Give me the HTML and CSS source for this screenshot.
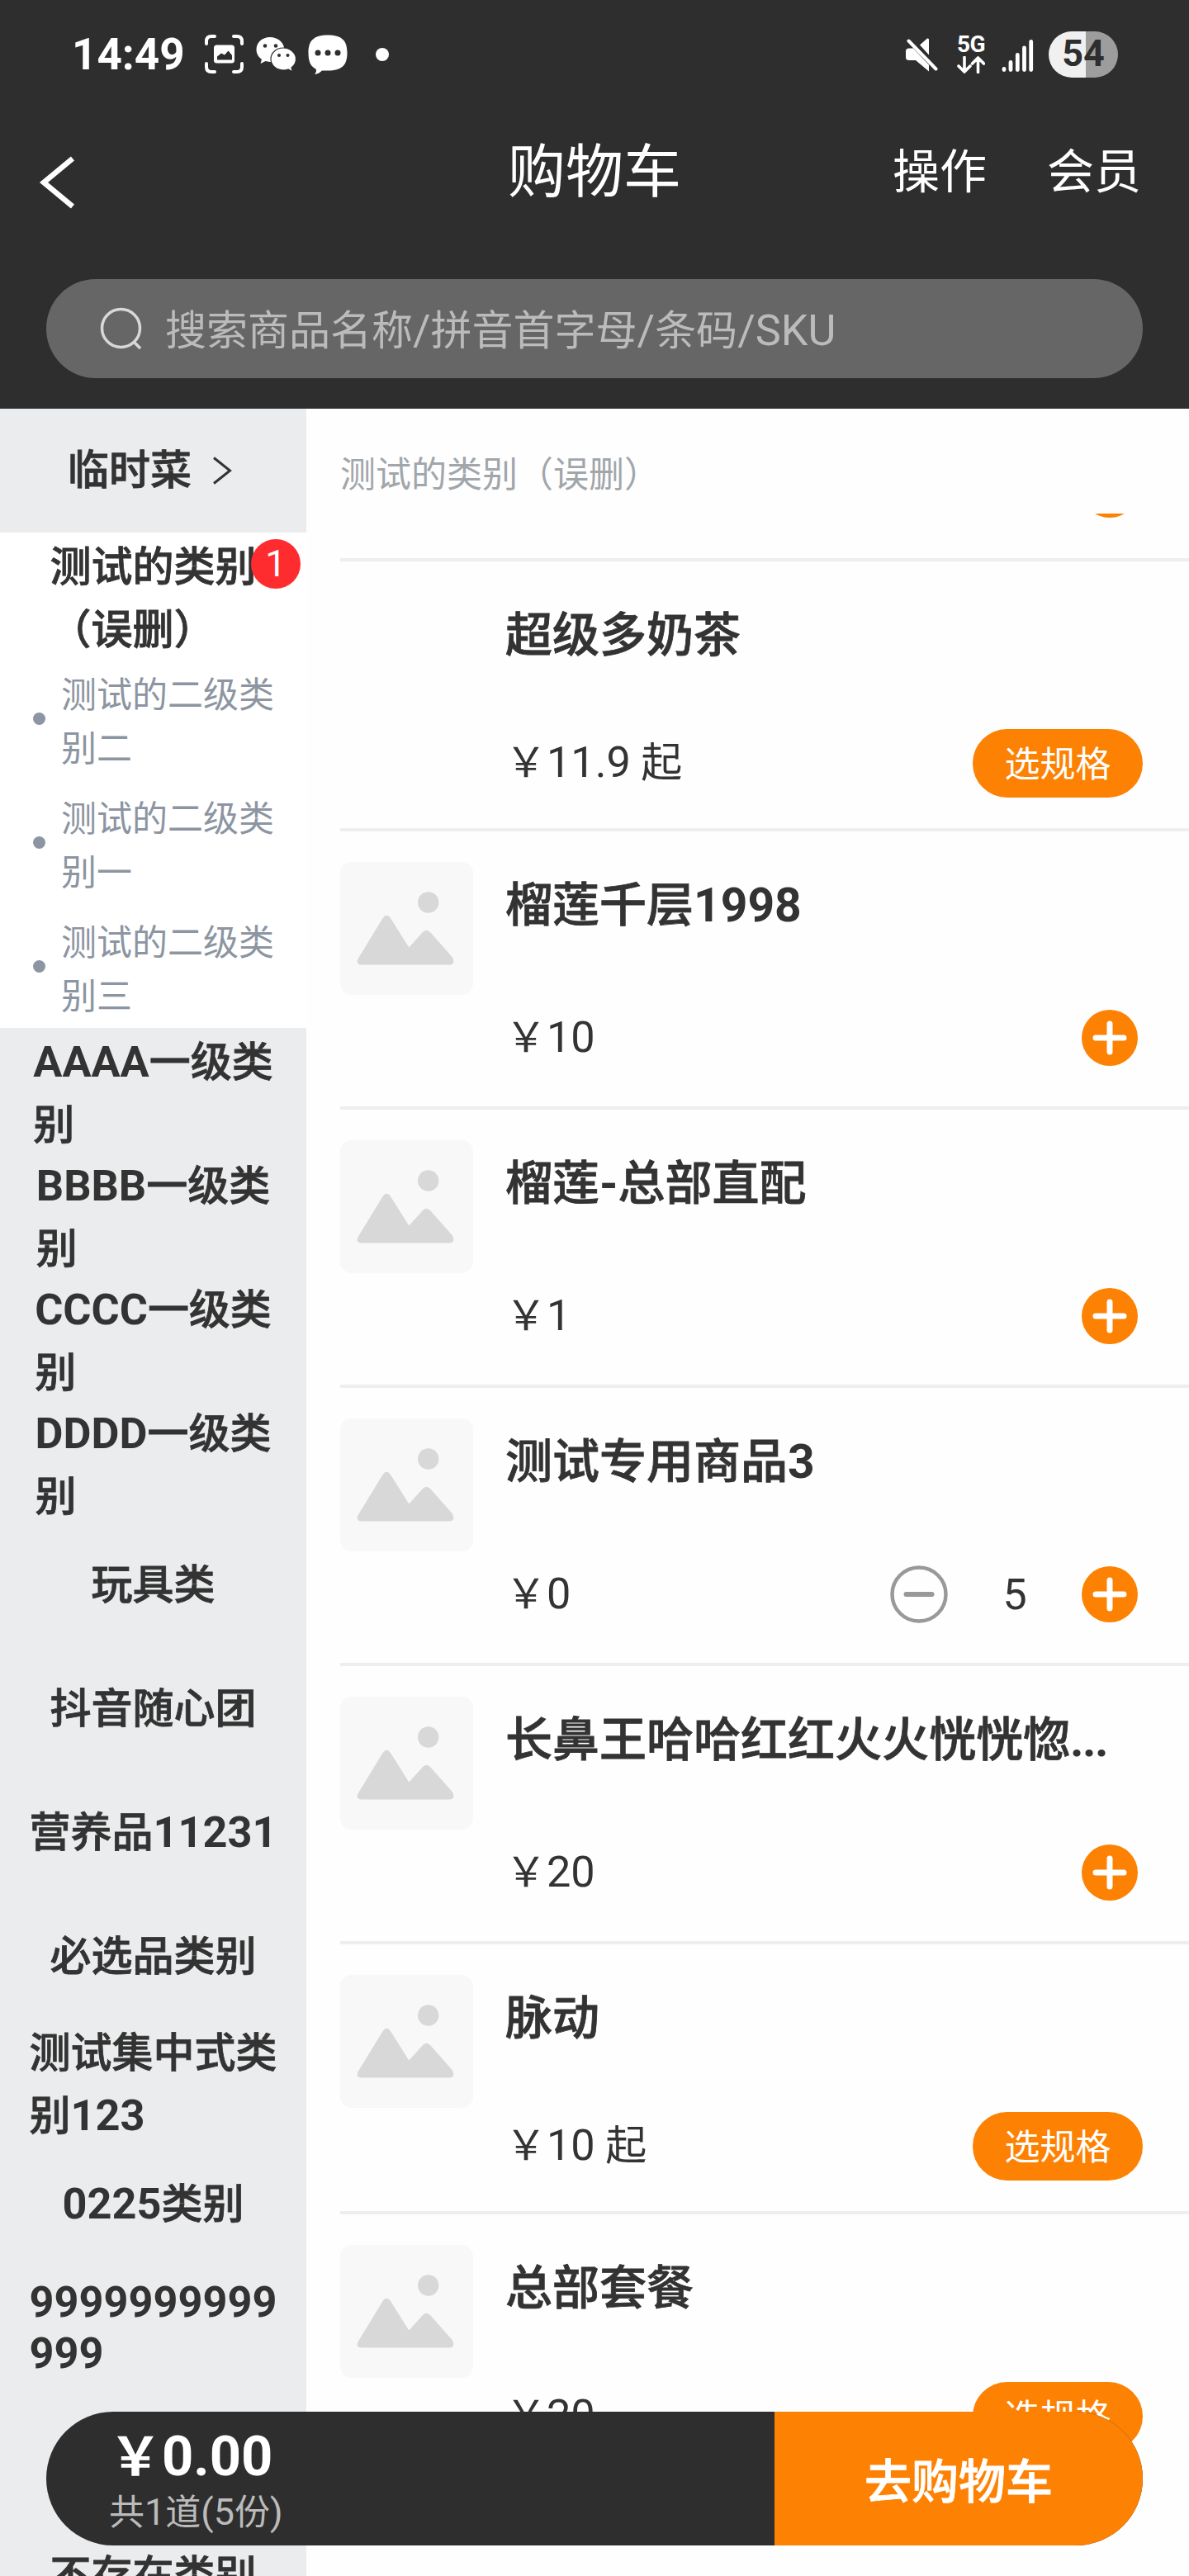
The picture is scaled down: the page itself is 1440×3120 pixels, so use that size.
FILE: index.html
```html
<!DOCTYPE html>
<html lang="zh-CN">
<head>
    <meta charset="UTF-8">
    <meta name="viewport" content="width=device-width, initial-scale=1.0">
    <title>购物车</title>
    <link rel="stylesheet" href="styles.css">
</head>
<body>

    <!-- shared icons -->
    <svg class="sprite">
        <symbol id="photo" viewBox="0 0 161 161">
            <circle cx="106.7" cy="49" r="12.7"/>
            <path d="M22 116.5 51 69Q56.300 60.500 61.600 69L83.300 103.500 99.500 85.500Q104.500 80 109.500 85.500L136 115.500Q140 124.500 132 124.500H26Q18 124 22 116.500Z"/>
        </symbol>
        <symbol id="plus" viewBox="0 0 68 68">
            <circle cx="34" cy="34" r="34" fill="#fd8103"/>
            <path d="M17 34h34M34 17v34" stroke="#fff" stroke-width="7" stroke-linecap="round"/>
        </symbol>
        <symbol id="minus" viewBox="0 0 70 70">
            <circle cx="35" cy="35" r="32.500" fill="none" stroke="#999" stroke-width="4.500"/>
            <path d="M19.500 35h31" stroke="#999" stroke-width="6" stroke-linecap="round"/>
        </symbol>
    </svg>

    <header class="header">
        <div class="status">
            <span class="time">14:49</span>
            <svg class="ic-scan" width="47" height="48" viewBox="0 0 47 48">
                <path d="M2 11V8Q2 2 8 2h4M35 2h4q6 0 6 6v3M45 35v4q0 6-6 6h-4M12 45H8q-6 0-6-6v-4" fill="none" stroke="#fff" stroke-width="4" stroke-linecap="round"/>
                <rect x="11" y="12.500" width="25" height="22" rx="3.500" fill="#fff"/>
                <path d="M15 30.500v-4l5-4 4 2 4-4.500h1l4 5v5.500z" fill="#2e2e2e"/>
            </svg>
            <svg class="ic-wechat" width="49" height="43" viewBox="0 0 49 43">
                <path d="M17 0C7.500 0 .5 6.500.5 15c0 5 2.500 9 6.500 12L5.500 32l6-3q7 2 13 0.500 10-4 10-14.500C34 6.500 26.500 0 17 0Z" fill="#fff"/>
                <circle cx="11" cy="10.500" r="2.300" fill="#2e2e2e"/><circle cx="24" cy="10.500" r="2.300" fill="#2e2e2e"/>
                <path d="M33 13C24.500 13 18 19 18 26.500S24.500 40 33 40q3 0 6-1l5.500 3L43 37c3.500-2.500 5.500-6.500 5.500-10.500C48.500 19 41.500 13 33 13Z" fill="#fff" stroke="#2e2e2e" stroke-width="1.200"/>
                <circle cx="28" cy="22" r="2" fill="#2e2e2e"/><circle cx="38.500" cy="22" r="2" fill="#2e2e2e"/>
            </svg>
            <svg class="ic-msg" width="48" height="49" viewBox="0 0 48 49">
                <path d="M24 0.500C41 0.500 47.500 7 47.500 22S41 43.500 24 43.500H17Q13 47.500 8 48 11 44.500 9.500 41.500C3 38.500.5 32 .5 22 .5 7 7 .5 24 .5Z" fill="#fff"/>
                <g fill="#2e2e2e"><circle cx="12" cy="22" r="3.500"/><circle cx="24" cy="22" r="3.500"/><circle cx="36" cy="22" r="3.500"/></g>
            </svg>
            <span class="dot"></span>

            <svg class="ic-mute" width="40" height="41" viewBox="0 0 40 41">
                <path d="M1 16q0-3.500 4-3.500h5L29 32.500v8L13 27H5q-4 0-4-3.500zM18 8.500 27 .5Q29 0 29 2v18.500z" fill="#fff"/>
                <path d="M4.500 3.500 37.500 37.500" stroke="#fff" stroke-width="4" stroke-linecap="round"/>
            </svg>
            <div class="net">
                <span>5G</span>
                <svg width="34" height="21" viewBox="0 0 34 21">
                    <path d="M9 1.500v17M2 12l7 7 7-7M25.500 19.500v-17M18.500 9l7-7 7 7" fill="none" stroke="#fff" stroke-width="3.600" stroke-linecap="round" stroke-linejoin="round"/>
                </svg>
            </div>
            <svg class="ic-signal" width="40" height="40" viewBox="0 0 40 40">
                <path d="M3 36.500v-1M11 36.500v-9M19.300 36.500v-18M27.500 36.500v-26.500M35.700 36.500v-34" stroke="#fff" stroke-width="4.800" stroke-linecap="round"/>
            </svg>
            <span class="battery">54</span>
        </div>

        <nav class="navbar">
            <svg class="back" width="44" height="64" viewBox="0 0 44 64">
                <path d="M42 3 7 32l35 29" fill="none" stroke="#fff" stroke-width="6.500"/>
            </svg>
            <h1>购物车</h1>
            <a>操作</a>
            <a>会员</a>
        </nav>

        <div class="search">
            <svg width="52" height="52" viewBox="0 0 52 52">
                <circle cx="25.500" cy="25.500" r="23" fill="none" stroke="#d8d8d8" stroke-width="3.500"/>
                <path d="M41 42l8 8" stroke="#d8d8d8" stroke-width="3.500"/>
            </svg>
            <span>搜索商品名称<b>/</b>拼音首字母<b>/</b>条码<b>/SKU</b></span>
        </div>
    </header>

    <main class="main">
        <ul class="sidebar">
            <li class="temp"><p>临时菜</p><svg class="chev" width="24" height="36" viewBox="0 0 24 36"><path d="M2 2.500 21.500 18 2 33.500" fill="none" stroke="#333" stroke-width="3"/></svg></li>
            <li class="active two"><p>测试的类别<br>（误删）</p><span class="badge">1</span></li>
            <li class="sub two"><p>测试的二级类别二</p></li>
            <li class="sub two"><p>测试的二级类别一</p></li>
            <li class="sub two"><p>测试的二级类别三</p></li>
            <li class="two"><p><b>AAAA</b>一级类<br>别</p></li>
            <li class="two"><p><b>BBBB</b>一级类<br>别</p></li>
            <li class="two"><p><b>CCCC</b>一级类<br>别</p></li>
            <li class="two"><p><b>DDDD</b>一级类<br>别</p></li>
            <li><p>玩具类</p></li>
            <li><p>抖音随心团</p></li>
            <li><p>营养品<b>11231</b></p></li>
            <li><p>必选品类别</p></li>
            <li class="two"><p>测试集中式类<br>别<b>123</b></p></li>
            <li><p><b>0225</b>类别</p></li>
            <li class="digits"><p><b>9999999999<br>999</b></p></li>
            <li></li>
            <li><p>不存在类别</p></li>
        </ul>

        <section class="goods">
            <h2>测试的类别（误删）</h2>
            <div class="list">
                <div class="item first">
                    <div class="info">
                        <h3></h3>
                        <div class="foot"><svg class="plus"><use href="#plus"/></svg></div>
                    </div>
                </div>
                <div class="item spec">
                    <div class="thumb empty"></div>
                    <div class="info">
                        <h3>超级多奶茶</h3>
                        <div class="foot"><span class="price">￥<b>11.9</b> 起</span><button>选规格</button></div>
                    </div>
                </div>
                <div class="item">
                    <svg class="thumb"><use href="#photo"/></svg>
                    <div class="info">
                        <h3>榴莲千层<b>1998</b></h3>
                        <div class="foot"><span class="price">￥<b>10</b></span><svg class="plus"><use href="#plus"/></svg></div>
                    </div>
                </div>
                <div class="item">
                    <svg class="thumb"><use href="#photo"/></svg>
                    <div class="info">
                        <h3>榴莲<b>-</b>总部直配</h3>
                        <div class="foot"><span class="price">￥<b>1</b></span><svg class="plus"><use href="#plus"/></svg></div>
                    </div>
                </div>
                <div class="item">
                    <svg class="thumb"><use href="#photo"/></svg>
                    <div class="info">
                        <h3>测试专用商品<b>3</b></h3>
                        <div class="foot"><span class="price">￥<b>0</b></span><svg class="minus"><use href="#minus"/></svg><span class="count">5</span><svg class="plus"><use href="#plus"/></svg></div>
                    </div>
                </div>
                <div class="item">
                    <svg class="thumb"><use href="#photo"/></svg>
                    <div class="info">
                        <h3>长鼻王哈哈红红火火恍恍惚<b class="dots">...</b></h3>
                        <div class="foot"><span class="price">￥<b>20</b></span><svg class="plus"><use href="#plus"/></svg></div>
                    </div>
                </div>
                <div class="item spec">
                    <svg class="thumb"><use href="#photo"/></svg>
                    <div class="info">
                        <h3>脉动</h3>
                        <div class="foot"><span class="price">￥<b>10</b> 起</span><button>选规格</button></div>
                    </div>
                </div>
                <div class="item spec">
                    <svg class="thumb"><use href="#photo"/></svg>
                    <div class="info">
                        <h3>总部套餐</h3>
                        <div class="foot"><span class="price">￥<b>20</b></span><button>选规格</button></div>
                    </div>
                </div>
            </div>
        </section>
    </main>

    <footer class="cart">
        <div class="total">
            <strong>￥<b>0.00</b></strong>
            <span>共<b>1</b>道<b>(5</b>份<b>)</b></span>
        </div>
        <div class="go">去购物车</div>
    </footer>

</body>
</html>
```
FILE: styles.css
```css
* {
    box-sizing: border-box;
    margin: 0;
    padding: 0;
}

body {
    width: 1440px;
    height: 3120px;
    overflow: hidden;
    position: relative;
    font-family: Roboto, "Noto Sans CJK SC", sans-serif;
    color: #333;
    background: #fefefe;
}

.sprite {
    display: none;
}

svg {
    flex: none;
}

/* latin letters and digits run slightly larger than the hanzi */
b {
    font-size: 1.045em;
    font-weight: inherit;
}

/* header */
.header {
    height: 495px;
    background: #2e2e2e;
    color: #fff;
}

.status {
    height: 132px;
    display: flex;
    align-items: center;
    padding: 0 86px 0 87px;
}

.time {
    width: 161px;
    font-size: 53px;
    font-weight: 700;
}

.ic-wechat {
    margin-left: 15px;
}

.ic-msg {
    margin-left: 14px;
}

.dot {
    width: 16px;
    height: 16px;
    margin-left: 34px;
    border-radius: 50%;
    background: #fff;
}

.ic-mute {
    margin-left: auto;
}

.net {
    width: 34px;
    margin-left: 23px;
    display: flex;
    flex-direction: column;
    gap: 4px;
}

.net span {
    font-size: 28px;
    line-height: 20px;
    font-weight: 700;
    letter-spacing: -0.5px;
}

.ic-signal {
    margin: 4px 0 0 20px;
}

.battery {
    width: 84px;
    height: 56px;
    margin-left: 17px;
    border-radius: 28px;
    background: linear-gradient(90deg, #f0f0f0 45px, #9d9d9d 45px);
    color: #2e2e2e;
    font-size: 45px;
    font-weight: 700;
    line-height: 54px;
    text-align: center;
}

.navbar {
    height: 150px;
    display: flex;
    align-items: center;
    padding: 0 58px 0 46px;
    white-space: nowrap;
}

.back {
    margin-top: 28px;
}

.navbar h1 {
    width: 466px;
    margin: 3px 0 0 525px;
    font-size: 70px;
    font-weight: 400;
    line-height: 100px;
}

.navbar a {
    margin-top: 3px;
    font-size: 57px;
    line-height: 80px;
}

.navbar a:last-child {
    margin-left: auto;
}

.search {
    height: 120px;
    margin: 56px 56px 0;
    padding-left: 65px;
    border-radius: 60px;
    background: #666;
    display: flex;
    align-items: center;
    gap: 27px;
    color: #bbb;
    font-size: 50px;
}

.search span {
    margin-top: -5px;
}

/* category sidebar */
.main {
    display: flex;
    height: 2625px;
}

.sidebar {
    width: 371px;
    background: #ebecee;
    list-style: none;
    font-size: 50px;
    line-height: 76px;
    font-weight: 500;
    overflow: hidden;
}

.sidebar li {
    height: 150px;
    position: relative;
    display: flex;
    align-items: center;
    justify-content: center;
}

.sidebar p {
    white-space: nowrap;
    -webkit-text-stroke: 0.8px currentColor;
}

.sidebar b,
.info h3 b,
.total strong {
    font-weight: 700;
    -webkit-text-stroke: 0;
}

.sidebar .temp {
    padding-right: 8px;
}

.sidebar .two p {
    margin-top: 10px;
}

.chev {
    margin-left: 25px;
}

.sidebar .active,
.sidebar .sub {
    background: #fff;
}

.badge {
    position: absolute;
    top: 8px;
    right: 7px;
    width: 60px;
    height: 60px;
    border-radius: 50%;
    background: #ff2c2f;
    color: #fff;
    font-size: 45px;
    font-weight: 400;
    line-height: 60px;
    text-align: center;
}

.sidebar .sub {
    justify-content: flex-start;
    padding-left: 40px;
    font-size: 43px;
    line-height: 65px;
    font-weight: 400;
    color: #8c95a1;
}

.sub::before {
    content: "";
    width: 15px;
    height: 15px;
    margin-right: 19px;
    border-radius: 50%;
    background: #8c95a1;
}

.sidebar .sub p {
    width: 262px;
    white-space: normal;
    -webkit-text-stroke: 0;
}

.digits {
    line-height: 62px;
}

/* goods */
.goods {
    flex: 1;
    padding-left: 41px;
}

.goods h2 {
    height: 127px;
    padding-top: 48px;
    font-size: 43px;
    font-weight: 400;
    line-height: 64px;
    color: #a1a6ab;
}

.list {
    height: 2498px;
    overflow: hidden;
}

.item {
    height: 337px;
    padding: 37px 56px 0 0;
    display: flex;
    border-bottom: 4px solid #eceeef;
}

.item.spec {
    height: 327px;
}

.item:last-child {
    border-bottom: none;
}

/* scrolled almost out of view */
.item.first {
    margin-top: -279px;
}

.thumb {
    width: 161px;
    height: 161px;
    margin-right: 39px;
    border-radius: 14px;
    background: #f8f8f8;
    fill: #d8d8d8;
}

.thumb.empty {
    background: none;
}

.info {
    flex: 1;
}

.info h3 {
    height: 60px;
    margin-top: 23px;
    font-size: 57px;
    font-weight: 500;
    line-height: 60px;
    white-space: nowrap;
    -webkit-text-stroke: 0.8px currentColor;
}

.info h3 b {
    font-size: 1em;
}

.info h3 .dots {
    letter-spacing: -1.5px;
}

.foot {
    height: 84px;
    margin-top: 88px;
    display: flex;
    align-items: center;
}

.spec .foot {
    margin-top: 82px;
}

.price {
    margin-right: auto;
    font-size: 50px;
    line-height: 60px;
}

.first .plus {
    margin-left: auto;
}

.plus {
    width: 68px;
    height: 68px;
    margin-right: 6px;
}

.minus {
    width: 70px;
    height: 70px;
}

.count {
    width: 162px;
    text-align: center;
    font-size: 52px;
}

.foot button {
    width: 206px;
    height: 83px;
    padding-bottom: 4px;
    border: none;
    border-radius: 42px;
    background: #fd8103;
    color: #fff;
    font: inherit;
    font-size: 43px;
}

/* floating cart bar */
.cart {
    position: absolute;
    left: 56px;
    right: 56px;
    top: 2921px;
    height: 162px;
    border-radius: 81px;
    overflow: hidden;
    display: flex;
    background: #2e2e2e;
    color: #fff;
}

.total {
    width: 882px;
    padding: 16px 0 0 76px;
    display: flex;
    flex-direction: column;
}

.total strong {
    font-size: 64px;
    line-height: 76px;
}

.total span {
    margin-top: -3px;
    font-size: 43px;
    line-height: 62px;
    color: #bbb;
}

.go {
    flex: 1;
    background: #fd8103;
    font-size: 57px;
    font-weight: 500;
    line-height: 172px;
    text-align: center;
    -webkit-text-stroke: 0.8px currentColor;
}
```
